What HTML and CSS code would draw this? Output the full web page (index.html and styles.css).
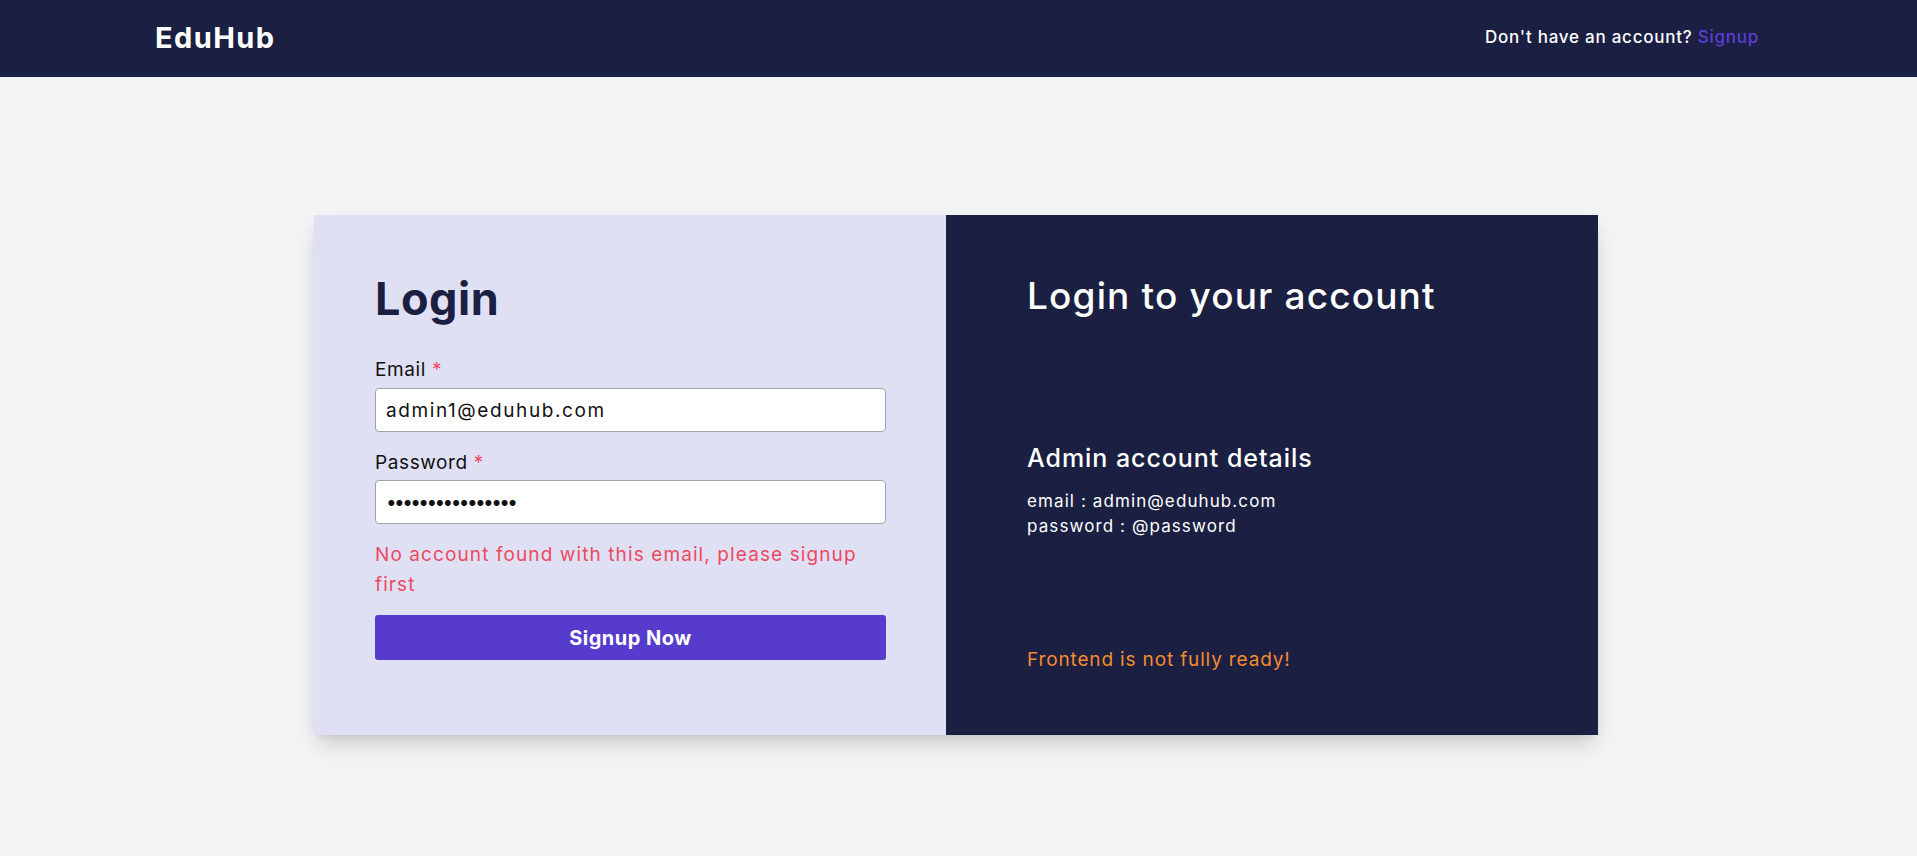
FILE: index.html
```html
<!DOCTYPE html>
<html lang="en">
<head>
<meta charset="utf-8">
<title>EduHub - Login</title>
<link rel="stylesheet" href="styles.css">
</head>
<body>
<header class="topbar">
  <div class="brand">EduHub</div>
  <div class="topbar-right">Don't have an account? <a class="signup-link" href="#">Signup</a></div>
</header>
<main class="page">
  <section class="card">
    <div class="card-left">
      <h1 class="login-title">Login</h1>
      <form class="login-form">
        <label class="field-label label-email">Email <span class="req">*</span></label>
        <input class="field-input" type="text" value="admin1@eduhub.com">
        <label class="field-label label-password">Password <span class="req">*</span></label>
        <input class="field-input password-input" type="password" value="adminpassword123">
        <p class="error-msg">No account found with this email, please signup first</p>
        <button class="submit-btn" type="button">Signup Now</button>
      </form>
    </div>
    <div class="card-right">
      <h2 class="right-title">Login to your account</h2>
      <h3 class="admin-title">Admin account details</h3>
      <p class="admin-line first">email : admin@eduhub.com</p>
      <p class="admin-line">password : @password</p>
      <p class="warn">Frontend is not fully ready!</p>
    </div>
  </section>
</main>
</body>
</html>
```
FILE: styles.css
```css
* { box-sizing: border-box; }
html, body { margin: 0; padding: 0; }
body {
  font-family: Inter, "Noto Sans", sans-serif;
  background: #f3f4f6;
  color: #111;
  height: 856px;
  overflow: hidden;
}
.topbar {
  height: 77px;
  background: #1b2042;
  display: flex;
  align-items: center;
  justify-content: space-between;
  padding: 0 158px 3px 155px;
  color: #fff;
}
.brand {
  font-size: 29px;
  font-weight: 700;
  letter-spacing: 1.4px;
}
.topbar-right {
  font-size: 17px;
  font-weight: 500;
  letter-spacing: 0.75px;
}
.signup-link {
  color: #5a3fd4;
  text-decoration: none;
}
.page {
  display: flex;
  justify-content: center;
  padding: 138px 5px 0 0;
}
.card {
  width: 1284px;
  height: 520px;
  display: grid;
  grid-template-columns: 632px 1fr;
  box-shadow: 0 12px 22px -4px rgba(0, 0, 0, 0.18), 0 4px 8px -4px rgba(0, 0, 0, 0.1);
}
.card-left {
  background: #e0e0f5;
  padding: 56px 60px 0 61px;
}
.login-title {
  margin: 0 0 30px;
  font-size: 45px;
  line-height: 56px;
  font-weight: 700;
  color: #1b2042;
  letter-spacing: 0.5px;
}
.login-form {
  display: flex;
  flex-direction: column;
}
.field-label {
  font-size: 19px;
  line-height: 26px;
  color: #111;
  letter-spacing: 0.6px;
  margin-bottom: 5px;
}
.label-password { margin-bottom: 4px; }
.req { color: #ef4b63; }
.field-input {
  height: 44px;
  border: 1px solid #9ca3af;
  border-radius: 4px;
  background: #fff;
  font-family: inherit;
  font-size: 19px;
  letter-spacing: 1.6px;
  padding: 0 10px;
  color: #111;
  margin-bottom: 18px;
  width: 511px;
}
.password-input {
  letter-spacing: -2.6px;
  margin-bottom: 16px;
}
.error-msg {
  margin: 0 0 15px;
  font-size: 19px;
  line-height: 30px;
  letter-spacing: 1.1px;
  color: #ec4a5f;
}
.submit-btn {
  height: 45px;
  width: 511px;
  border: none;
  border-radius: 3px;
  background: #563bcc;
  color: #fff;
  font-family: inherit;
  font-size: 20px;
  font-weight: 700;
  letter-spacing: 0.5px;
}
.card-right {
  background: #1b2042;
  color: #fff;
  padding: 57px 40px 0 81px;
  display: flex;
  flex-direction: column;
}
.right-title {
  margin: 0;
  font-size: 37px;
  line-height: 48px;
  font-weight: 500;
  letter-spacing: 1.15px;
}
.admin-title {
  margin: 122px 0 15px;
  font-size: 25px;
  line-height: 32px;
  font-weight: 500;
  letter-spacing: 0.95px;
}
.admin-line {
  margin: 0;
  font-size: 17px;
  line-height: 25px;
  letter-spacing: 1.1px;
}
.warn {
  margin: 107px 0 0;
  font-size: 19px;
  line-height: 28px;
  letter-spacing: 0.85px;
  color: #f68a2e;
}
```
